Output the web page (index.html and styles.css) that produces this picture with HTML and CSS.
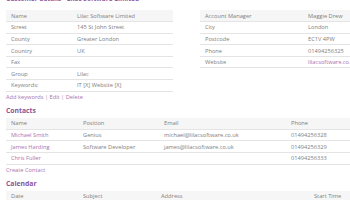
FILE: index.html
```html
<!DOCTYPE html>
<html>
<head>
<meta charset="utf-8">
<link rel="stylesheet" href="styles.css">
</head>
<body>
<div class="page">
  <h2 class="title">Customer details - Lilac Software Limited</h2>
  <div class="details">
    <table class="grid left">
      <tr class="shade"><td class="c1">Name</td><td>Lilac Software Limited</td></tr>
      <tr><td class="c1">Street</td><td>145 St John Street</td></tr>
      <tr><td class="c1">County</td><td>Greater London</td></tr>
      <tr><td class="c1">Country</td><td>UK</td></tr>
      <tr><td class="c1">Fax</td><td></td></tr>
      <tr><td class="c1">Group</td><td>Lilac</td></tr>
      <tr><td class="c1">Keywords:</td><td>IT [X] Website [X]</td></tr>
    </table>
    <table class="grid right">
      <tr class="shade"><td class="r1">Account Manager</td><td>Maggie Drew</td></tr>
      <tr><td class="r1">City</td><td>London</td></tr>
      <tr><td class="r1">Postcode</td><td>EC1V 4PW</td></tr>
      <tr><td class="r1">Phone</td><td>01494256325</td></tr>
      <tr><td class="r1">Website</td><td><a class="link">lilacsoftware.co.uk</a></td></tr>
    </table>
  </div>
  <div class="actions"><a class="link">Add keywords</a> | <a class="link">Edit</a> | <a class="link">Delete</a></div>
  <h3 class="section">Contacts</h3>
  <table class="grid wide">
    <tr class="shade"><td class="k1">Name</td><td class="k2">Position</td><td class="k3">Email</td><td>Phone</td></tr>
    <tr><td><a class="link">Michael Smith</a></td><td>Genius</td><td>michael@lilacsoftware.co.uk</td><td>01494256328</td></tr>
    <tr><td><a class="link">James Harding</a></td><td>Software Developer</td><td>james@lilacsoftware.co.uk</td><td>01494256329</td></tr>
    <tr><td><a class="link">Chris Fuller</a></td><td></td><td></td><td>01494256333</td></tr>
  </table>
  <div class="actions"><a class="link">Create Contact</a></div>
  <h3 class="section">Calendar</h3>
  <table class="grid wide">
    <tr class="shade"><td class="k1">Date</td><td class="a2">Subject</td><td class="a3">Address</td><td>Start Time</td></tr>
  </table>
</div>
</body>
</html>
```

FILE: styles.css
```css
html, body {
  margin: 0;
  padding: 0;
  overflow: hidden;
  background: #fff;
}
.page {
  width: 380px;
  margin-top: -7px;
  padding-left: 6px;
  font-family: "Open Sans", "Liberation Sans", sans-serif;
  font-size: 5.7px;
  color: #808080;
}
.title {
  margin: 0;
  font-size: 6.5px;
  font-weight: bold;
  color: #9460a0;
  height: 17px;
  line-height: 12px;
}
.details {
  display: flex;
  align-items: flex-start;
  gap: 27px;
}
.grid {
  border-collapse: collapse;
}
.grid td {
  height: 11.6px;
  padding: 0 0 0 5px;
  border-bottom: 1px solid #e4e4e4;
  white-space: nowrap;
  box-sizing: border-box;
  vertical-align: middle;
}
.shade td {
  background: #f6f6f6;
}
.left { width: 167px; }
.left .c1 { width: 66px; }
.right { width: 180px; }
.right .r1 { width: 103px; }
.link {
  color: #a872b0;
  text-decoration: none;
}
.actions {
  height: 11px;
  line-height: 11px;
  color: #999;
}
.section {
  margin: 0;
  font-size: 6.8px;
  font-weight: bold;
  color: #8c5397;
  height: 15px;
  line-height: 16px;
}
.wide { width: 374px; }
.wide .k1 { width: 72px; }
.wide .k2 { width: 81px; }
.wide .k3 { width: 127px; }
.wide .a2 { width: 78px; }
.wide .a3 { width: 153px; }
```
